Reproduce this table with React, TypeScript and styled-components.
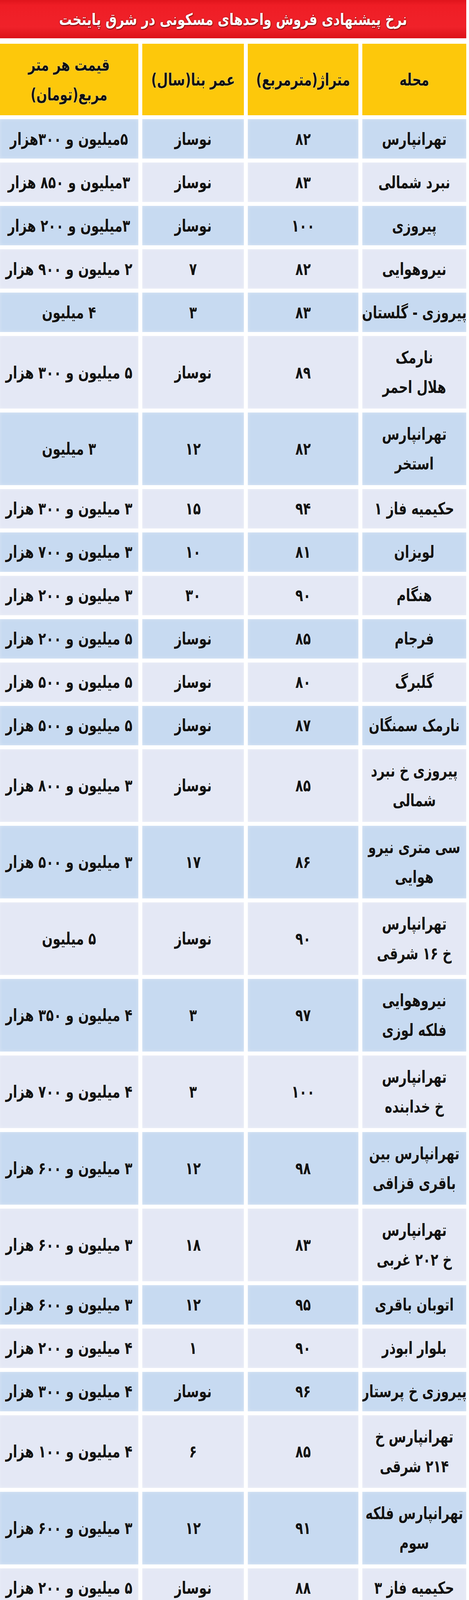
import React from "react";
import styled, { createGlobalStyle } from "styled-components";

const GlobalStyle = createGlobalStyle`
  html, body {
    margin: 0;
    padding: 0;
    background: #ffffff;
  }
  body {
    font-family: "DejaVu Sans", "Noto Sans", sans-serif;
  }
`;

// column widths, right to left: محله, متراژ, عمر بنا, قیمت
const COLUMNS = "266px 283px 260px 355px";

const Page = styled.div`
  direction: rtl;
  width: 1200px;
  box-sizing: border-box;
  padding-right: 7px;
  display: flex;
  flex-direction: column;
  gap: 10px;
`;

const TitleBar = styled.div`
  height: 98px;
  margin-bottom: 4px;
  background: linear-gradient(180deg, #e0141c 0%, #ef1d25 14%, #f0222a 70%, #dc1219 100%);
  display: flex;
  align-items: center;
  justify-content: center;
`;

const Title = styled.h1`
  margin: 0;
  font-family: "DejaVu Sans Condensed", "DejaVu Sans", sans-serif;
  font-stretch: condensed;
  font-weight: 700;
  font-size: 36px;
  color: #ffffff;
  white-space: nowrap;
  transform: scaleY(1.15);
  text-shadow: 1px 2px 2px rgba(70, 0, 0, 0.7), 0 0 3px rgba(90, 0, 0, 0.5);
`;

const Row = styled.div<{ $h: number }>`
  display: grid;
  grid-template-columns: ${COLUMNS};
  grid-template-rows: ${(p) => p.$h}px;
  column-gap: 10px;
  height: ${(p) => p.$h}px;
`;

const Cell = styled.div<{ $tone: "head" | "blue" | "light" }>`
  display: flex;
  align-items: center;
  justify-content: center;
  text-align: center;
  overflow: hidden;
  background: ${(p) =>
    p.$tone === "head" ? "#fdc80b" : p.$tone === "blue" ? "#c7daf1" : "#e4e8f5"};
  box-shadow: ${(p) =>
    p.$tone === "head" ? "none" : "inset 0 0 10px rgba(255, 255, 255, 0.35)"};
`;

// the print font is tall and narrow, so the glyphs are stretched upward a little
const Text = styled.span`
  display: inline-block;
  font-family: "DejaVu Sans Condensed", "DejaVu Sans", sans-serif;
  font-stretch: condensed;
  font-weight: 700;
  font-size: 36px;
  line-height: 1.75;
  color: #121212;
  letter-spacing: -0.6px;
  text-shadow: 0 0 2px rgba(255, 255, 255, 0.95);
  white-space: pre;
  transform: scaleY(1.2);
`;

type Item = { area: string; size: string; age: string; price: string };

const data: Item[] = [
  { area: "تهرانپارس", size: "۸۲", age: "نوساز", price: "۵میلیون و ۳۰۰هزار" },
  { area: "نبرد شمالی", size: "۸۳", age: "نوساز", price: "۳میلیون و ۸۵۰ هزار" },
  { area: "پیروزی", size: "۱۰۰", age: "نوساز", price: "۳میلیون و ۲۰۰ هزار" },
  { area: "نیروهوایی", size: "۸۲", age: "۷", price: "۲ میلیون و ۹۰۰ هزار" },
  { area: "پیروزی - گلستان", size: "۸۳", age: "۳", price: "۴ میلیون" },
  { area: "نارمک\nهلال احمر", size: "۸۹", age: "نوساز", price: "۵ میلیون و ۳۰۰ هزار" },
  { area: "تهرانپارس\nاستخر", size: "۸۲", age: "۱۲", price: "۳ میلیون" },
  { area: "حکیمیه فاز ۱", size: "۹۴", age: "۱۵", price: "۳ میلیون و ۳۰۰ هزار" },
  { area: "لویزان", size: "۸۱", age: "۱۰", price: "۳ میلیون و ۷۰۰ هزار" },
  { area: "هنگام", size: "۹۰", age: "۳۰", price: "۳ میلیون و ۲۰۰ هزار" },
  { area: "فرجام", size: "۸۵", age: "نوساز", price: "۵ میلیون و ۲۰۰ هزار" },
  { area: "گلبرگ", size: "۸۰", age: "نوساز", price: "۵ میلیون و ۵۰۰ هزار" },
  { area: "نارمک سمنگان", size: "۸۷", age: "نوساز", price: "۵ میلیون و ۵۰۰ هزار" },
  { area: "پیروزی خ نبرد\nشمالی", size: "۸۵", age: "نوساز", price: "۳ میلیون و ۸۰۰ هزار" },
  { area: "سی متری نیرو\nهوایی", size: "۸۶", age: "۱۷", price: "۳ میلیون و ۵۰۰ هزار" },
  { area: "تهرانپارس\nخ ۱۶ شرقی", size: "۹۰", age: "نوساز", price: "۵ میلیون" },
  { area: "نیروهوایی\nفلکه لوزی", size: "۹۷", age: "۳", price: "۴ میلیون و ۳۵۰ هزار" },
  { area: "تهرانپارس\nخ خدابنده", size: "۱۰۰", age: "۳", price: "۴ میلیون و ۷۰۰ هزار" },
  { area: "تهرانپارس بین\nباقری قزاقی", size: "۹۸", age: "۱۲", price: "۳ میلیون و ۶۰۰ هزار" },
  { area: "تهرانپارس\nخ ۲۰۲ غربی", size: "۸۳", age: "۱۸", price: "۳ میلیون و ۶۰۰ هزار" },
  { area: "اتوبان باقری", size: "۹۵", age: "۱۲", price: "۳ میلیون و ۶۰۰ هزار" },
  { area: "بلوار ابوذر", size: "۹۰", age: "۱", price: "۴ میلیون و ۲۰۰ هزار" },
  { area: "پیروزی خ پرستار", size: "۹۶", age: "نوساز", price: "۴ میلیون و ۳۰۰ هزار" },
  { area: "تهرانپارس خ\n۲۱۴ شرقی", size: "۸۵", age: "۶", price: "۴ میلیون و ۱۰۰ هزار" },
  { area: "تهرانپارس فلکه\nسوم", size: "۹۱", age: "۱۲", price: "۳ میلیون و ۶۰۰ هزار" },
  { area: "حکیمیه فاز ۳", size: "۸۸", age: "نوساز", price: "۵ میلیون و ۲۰۰ هزار" },
  { area: "حکیمیه برج\nنگارستان", size: "۹۰", age: "۴", price: "۳ میلیون و ۴۵۰ هزار" },
  { area: "میدان رسالت", size: "۹۰", age: "نوساز", price: "۴ میلیون و ۶۰۰ هزار" },
];

const App: React.FC = () => {
  return (
    <>
      <GlobalStyle />
      <Page>
        <TitleBar>
          <Title>نرخ پیشنهادی فروش واحدهای مسکونی در شرق پایتخت</Title>
        </TitleBar>
        <Row $h={183}>
          <Cell $tone="head"><Text>محله</Text></Cell>
          <Cell $tone="head"><Text>متراژ(مترمربع)</Text></Cell>
          <Cell $tone="head"><Text>عمر بنا(سال)</Text></Cell>
          <Cell $tone="head"><Text>{"قیمت هر متر\nمربع(تومان)"}</Text></Cell>
        </Row>
        {data.map((row, i) => {
          const tone = i % 2 === 0 ? "blue" : "light";
          const tall = row.area.includes("\n");
          const last = i === data.length - 1;
          return (
            <Row key={i} $h={last ? 110 : tall ? 186 : 101}>
              <Cell $tone={tone}><Text>{row.area}</Text></Cell>
              <Cell $tone={tone}><Text>{row.size}</Text></Cell>
              <Cell $tone={tone}><Text>{row.age}</Text></Cell>
              <Cell $tone={tone}><Text>{row.price}</Text></Cell>
            </Row>
          );
        })}
      </Page>
    </>
  );
};

export default App;
